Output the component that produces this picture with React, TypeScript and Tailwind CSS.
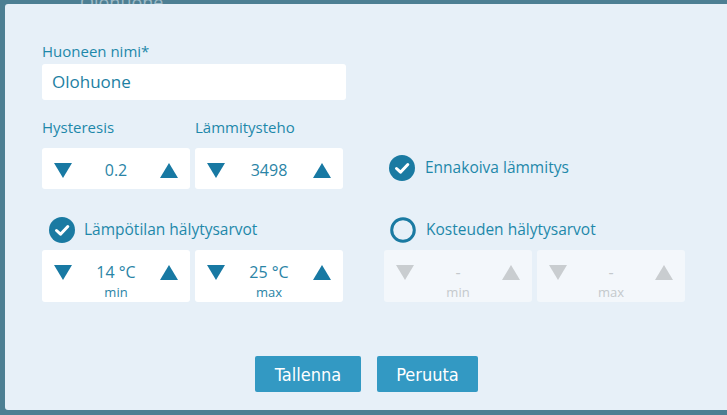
const ArrowDown = ({ muted }: { muted?: boolean }) => (
    <svg width="18" height="15" viewBox="0 0 18 15" className="shrink-0">
        <polygon points="0,0 18,0 9,15" fill={muted ? "#c9cdd0" : "#1879a3"} />
    </svg>
);

const ArrowUp = ({ muted }: { muted?: boolean }) => (
    <svg width="18" height="15" viewBox="0 0 18 15" className="shrink-0">
        <polygon points="9,0 18,15 0,15" fill={muted ? "#c9cdd0" : "#1879a3"} />
    </svg>
);

interface SpinnerProps {
    value: string;
    sub?: string;
    muted?: boolean;
}

const Spinner = ({ value, sub, muted }: SpinnerProps) => {
    return (
        <div
            className={`w-[148px] rounded-[3px] px-3 ${
                muted ? "bg-[#f3f7fb]" : "bg-white"
            } ${sub ? "h-[52px] pt-[14px]" : "h-[41px] pt-[14px]"}`}
        >
            <div className="flex items-center justify-between">
                <ArrowDown muted={muted} />
                <span
                    className={`text-[16px] leading-[16px] ${
                        muted ? "text-[#c4c9cc]" : "text-[#2a84a6]"
                    }`}
                >
                    {value}
                </span>
                <ArrowUp muted={muted} />
            </div>
            {sub && (
                <div
                    className={`text-center text-[13px] leading-[14px] mt-[5px] ${
                        muted ? "text-[#c4c9cc]" : "text-[#2a84a6]"
                    }`}
                >
                    {sub}
                </div>
            )}
        </div>
    );
};

const CheckCircle = ({ checked }: { checked: boolean }) =>
    checked ? (
        <svg width="26" height="26" viewBox="0 0 26 26" className="shrink-0">
            <circle cx="13" cy="13" r="13" fill="#1a7aa2" />
            <path
                d="M7.5 13.5 L11.5 17.2 L18.8 9.5"
                stroke="#fff"
                strokeWidth="3"
                fill="none"
                strokeLinecap="round"
                strokeLinejoin="round"
            />
        </svg>
    ) : (
        <svg width="26" height="26" viewBox="0 0 26 26" className="shrink-0">
            <circle cx="13" cy="13" r="11.3" fill="none" stroke="#1a7aa2" strokeWidth="3" />
        </svg>
    );

export default function App() {
    return (
        <div
            className="relative w-[727px] h-[415px] overflow-hidden bg-[#4d7f93]"
            style={{ fontFamily: "'Open Sans', 'Noto Sans', sans-serif" }}
        >
            <div className="absolute left-[80px] -top-[8px] text-[18px] leading-[20px] text-[#9dbac6]">
                Olohuone
            </div>
            <div className="absolute left-[5px] top-[4px] w-[730px] h-[406px] rounded-[3px] bg-[#e7f0f8] pl-[37px] pt-[38px]">
                <div className="text-[15px] leading-[18px] text-[#1e88aa]">
                    Huoneen nimi*
                </div>
                <div className="mt-[4px] w-[304px] h-[36px] rounded-[3px] bg-white pl-[10px] flex items-center text-[17px] font-medium text-[#1d7fa3]">
                    Olohuone
                </div>

                <div className="flex mt-[18px]">
                    <div className="flex flex-col">
                        <div className="flex gap-[5px]">
                            <div className="w-[148px] text-[15px] leading-[18px] text-[#1e88aa]">
                                Hysteresis
                            </div>
                            <div className="w-[148px] text-[15px] leading-[18px] text-[#1e88aa]">
                                Lämmitysteho
                            </div>
                        </div>
                        <div className="flex gap-[5px] mt-[12px]">
                            <Spinner value="0.2" />
                            <Spinner value="3498" />
                        </div>
                    </div>
                    <div className="flex items-center gap-[10px] ml-[46px] mt-[37px] h-[26px]">
                        <CheckCircle checked />
                        <span className="text-[15.5px] text-[#1e88aa]">
                            Ennakoiva lämmitys
                        </span>
                    </div>
                </div>

                <div className="flex gap-[41px] mt-[28px]">
                    <div className="flex flex-col">
                        <div className="flex items-center gap-[9px] ml-[7px] h-[26px]">
                            <CheckCircle checked />
                            <span className="text-[15.5px] text-[#1e88aa]">
                                Lämpötilan hälytysarvot
                            </span>
                        </div>
                        <div className="flex gap-[5px] mt-[7px]">
                            <Spinner value="14 °C" sub="min" />
                            <Spinner value="25 °C" sub="max" />
                        </div>
                    </div>
                    <div className="flex flex-col">
                        <div className="flex items-center gap-[10px] ml-[6px] h-[26px]">
                            <CheckCircle checked={false} />
                            <span className="text-[15.5px] text-[#1e88aa]">
                                Kosteuden hälytysarvot
                            </span>
                        </div>
                        <div className="flex gap-[5px] mt-[7px]">
                            <Spinner value="-" sub="min" muted />
                            <Spinner value="-" sub="max" muted />
                        </div>
                    </div>
                </div>

                <div
                    className="flex gap-[16px] ml-[213px] mt-[54px]"
                    style={{ fontFamily: "'DejaVu Sans Condensed', 'DejaVu Sans', sans-serif" }}
                >
                    <button className="w-[106px] h-[36px] rounded-[2px] bg-[#3399c3] text-white text-[18px]">
                        Tallenna
                    </button>
                    <button className="w-[101px] h-[36px] rounded-[2px] bg-[#3399c3] text-white text-[18px]">
                        Peruuta
                    </button>
                </div>
            </div>
        </div>
    );
}
